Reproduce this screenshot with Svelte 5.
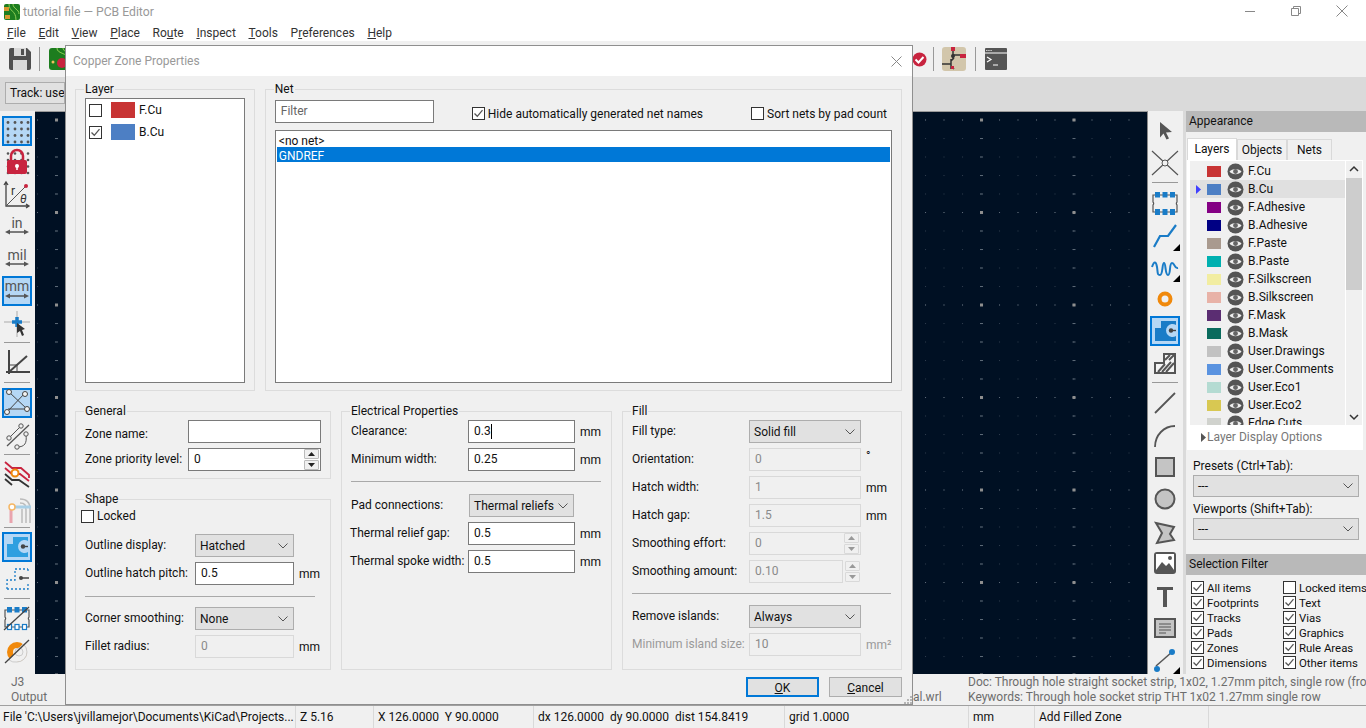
<script>
  const layers = [
    ['F.Cu','#c83434'],['B.Cu','#4d7fc4'],['F.Adhesive','#840084'],['B.Adhesive','#000084'],
    ['F.Paste','#a99a8f'],['B.Paste','#00b0b0'],['F.Silkscreen','#f2eda1'],['B.Silkscreen','#e8b2a7'],
    ['F.Mask','#5b2d72'],['B.Mask','#0a6b5d'],['User.Drawings','#c2c2c2'],['User.Comments','#5a93e0'],
    ['User.Eco1','#b4dbd2'],['User.Eco2','#d8c852'],['Edge.Cuts','#d0d2cd']
  ];
  const filters = [
    ['All items',true],['Locked items',false],['Footprints',true],['Text',true],['Tracks',true],['Vias',true],
    ['Pads',true],['Graphics',true],['Zones',true],['Rule Areas',true],['Dimensions',true],['Other items',true]
  ];
  const gridDots = [];
  for (const y of [6.5,13,19.5,26]) for (const x of [6,13,19.5,26]) gridDots.push([x,y]);
</script>

{#snippet cb(on)}
  <span class="cb">{#if on}<svg width="11" height="11" viewBox="0 0 11 11"><path d="M1.5 5.5 4.3 8.3 9.5 2.2" fill="none" stroke="#555" stroke-width="1.3"/></svg>{/if}</span>
{/snippet}
{#snippet chev()}
  <svg class="chev" width="10" height="6" viewBox="0 0 10 6"><path d="M.5.5 5 5 9.5.5" fill="none" stroke="#555"/></svg>
{/snippet}
{#snippet sel(text, cls)}
  <div class="select {cls}"><span>{text}</span>{@render chev()}</div>
{/snippet}
{#snippet spin(dis)}
  <div class="spin" class:dis>
    <span><svg width="7" height="4" viewBox="0 0 7 4"><path d="M3.5 0 7 4H0z" fill={dis ? '#999' : '#222'}/></svg></span>
    <span><svg width="7" height="4" viewBox="0 0 7 4"><path d="M0 0h7L3.5 4z" fill={dis ? '#999' : '#222'}/></svg></span>
  </div>
{/snippet}
{#snippet eye()}
  <svg width="17" height="17" viewBox="0 0 17 17"><circle cx="8.5" cy="8.5" r="8" fill="#555"/><path d="M2.5 8.5C5 5 12 5 14.5 8.5 12 12 5 12 2.5 8.5z" fill="#eee"/><circle cx="8.5" cy="8.5" r="2.4" fill="#666"/></svg>
{/snippet}
{#snippet zone(fill)}
  <path d="M5 25V12h6V5h15v4A6.500 6.500 0 1 0 26 20v5z" fill={fill}/><path d="M21 14.500h5" stroke="#444" stroke-width="1.400"/><circle cx="21" cy="14.500" r="2.200" fill="#444"/>
{/snippet}
{#snippet footprint(open)}
  <path d="M3 7h24v7a2 2 0 0 0 0 3v7H3v-7a2 2 0 0 0 0-3z" fill="none" stroke="#555" stroke-width="1.200"/>
  {#each [5,12.500,20] as x}
    <rect x={x} y="4" width="5" height="5.500" fill="#1a7cc7"/>
    <rect x={x + .5} y="21.500" width="4" height="5" fill={open ? '#fff' : '#1a7cc7'} stroke="#1a7cc7" stroke-width={open ? 1.200 : 1}/>
  {/each}
{/snippet}
{#snippet corner()}
  <path d="M30 23v7h-7z" fill="#000"/>
{/snippet}
{#snippet unitArrow(y)}
  <path d="M5 {y}h20" stroke="#555" stroke-width="1.500"/>
  <path d="M3 {y}l5-2.500v5zM27 {y}l-5-2.500v5z" fill="#555"/>
{/snippet}

<div class="app">
  <div class="title">
    <svg width="18" height="18" viewBox="0 0 18 18"><rect x="1" y="1" width="16" height="16" rx="2" fill="#1d7d1f"/><path d="M10 1c0 5 6 5 6 10M6 1c0 8 7 6 7 16" stroke="#8fcf55" fill="none"/><rect x="1" y="4" width="5" height="4" fill="#d9982f"/><rect x="2" y="12" width="5" height="4" fill="#d9982f"/></svg>
    <span class="ttext">tutorial file — PCB Editor</span>
    <div class="winbtns">
      <svg width="12" height="12" viewBox="0 0 12 12"><path d="M1 6.500h10" stroke="#888"/></svg>
      <svg width="12" height="12" viewBox="0 0 12 12"><path d="M3.500 3V1.500h7v7H9M1.500 3.500h7v7h-7z" fill="none" stroke="#888"/></svg>
      <svg width="12" height="12" viewBox="0 0 12 12"><path d="M.5.500l11 11M11.500.500l-11 11" stroke="#888"/></svg>
    </div>
  </div>
  <nav class="menu">
    <span><u>F</u>ile</span><span><u>E</u>dit</span><span><u>V</u>iew</span><span><u>P</u>lace</span><span>Ro<u>u</u>te</span><span><u>I</u>nspect</span><span><u>T</u>ools</span><span>P<u>r</u>eferences</span><span><u>H</u>elp</span>
  </nav>
  <div class="bar1">
    <svg class="save" width="22" height="22" viewBox="0 0 22 22"><path d="M0 2a2 2 0 0 1 2-2h16l4 4v16a2 2 0 0 1-2 2H2a2 2 0 0 1-2-2z" fill="#4f4f4f"/><rect x="5" y="0" width="12" height="8" fill="#d8d8d8"/><rect x="12" y="1" width="3" height="6" fill="#4f4f4f"/><rect x="4" y="12" width="14" height="10" fill="#d8d8d8"/></svg>
    <i class="vsep"></i>
    <svg class="pcb" width="24" height="24" viewBox="0 0 24 24"><rect x="0" y="1" width="22" height="22" rx="3" fill="#1d7d1f"/><path d="M8 1c0 6 9 4 14 12M14 1c0 3 4 4 8 7" stroke="#8fcf55" fill="none"/><circle cx="4" cy="15" r="1.500" fill="#f0c060"/><circle cx="13" cy="16" r="5" fill="#c8243f"/></svg>
    <div class="barend">
      <svg width="15" height="15" viewBox="0 0 15 15"><circle cx="7.500" cy="7.500" r="7" fill="#c8243f"/><path d="M3.500 7.500l3 3 5-5.500" stroke="#fff" stroke-width="2" fill="none"/></svg>
      <i class="vsep tall"></i>
      <svg class="sch" width="24" height="24" viewBox="0 0 24 24"><rect width="24" height="24" rx="3" fill="#d2c6ab"/><path d="M11 0v8M11 8h9M11 8v4M0 17h9M9 12v10M9 14l3-3M9 19l3 3" stroke="#333" stroke-width="1.500" fill="none"/><circle cx="11" cy="9" r="2" fill="#333"/><rect x="9" y="0" width="4" height="4" fill="#c8243f"/><rect x="18" y="7" width="6" height="4" fill="#c8243f"/><rect x="9" y="19" width="3" height="3" fill="#c8243f"/></svg>
      <i class="vsep"></i>
      <svg width="22" height="22" viewBox="0 0 22 22"><rect width="22" height="22" rx="1" fill="#555"/><path d="M0 5h22" stroke="#fff"/><path d="M1 2.500h6" stroke="#ccc" stroke-dasharray="1.500 .7"/><path d="M2 9l4 2.500L2 14" stroke="#fff" stroke-width="1.200" fill="none"/><path d="M8 17h5" stroke="#fff"/></svg>
    </div>
  </div>
  <div class="bar2"><div class="combo">Track: use</div></div>

  <div class="main">
    <div class="ltool">
      <div class="tb on"><svg viewBox="0 0 30 30">{#each gridDots as d}<circle cx={d[0]} cy={d[1]} r="1.400" fill="#555"/>{/each}</svg></div>
      <div class="tb g1"><svg viewBox="0 0 30 30">{#each gridDots as d}<circle cx={d[0]} cy={d[1]} r="1.300" fill="#555"/>{/each}<path d="M9 13V9a6 6 0 0 1 12 0v4" fill="none" stroke="#c8243f" stroke-width="2.500"/><rect x="5" y="13" width="20" height="14" rx="2" fill="#c8243f"/><circle cx="15" cy="19" r="2" fill="#fff"/><path d="M15 19v4" stroke="#fff" stroke-width="1.500"/></svg></div>
      <div class="tb g3"><svg viewBox="0 0 30 30"><path d="M4 2v24h22M2 5l2-3 2 3M24 24l3 2-3 2" fill="none" stroke="#444" stroke-width="1.300"/><path d="M4 26 24 6" stroke="#555"/><circle cx="24" cy="6" r="2" fill="#c8243f"/><text x="9" y="15" class="ict">r</text><text x="18" y="23" class="ict it">θ</text></svg></div>
      <div class="tb g3"><svg viewBox="0 0 30 30"><text x="15" y="14.500" class="icu">in</text>{@render unitArrow(19)}</svg></div>
      <div class="tb g2"><svg viewBox="0 0 30 30"><text x="15" y="14.500" class="icu">mil</text>{@render unitArrow(19)}</svg></div>
      <div class="tb on g1"><svg viewBox="0 0 30 30"><text x="15" y="15" class="icu">mm</text>{@render unitArrow(20)}</svg></div>
      <div class="tb g4"><svg viewBox="0 0 30 30"><path d="M15 1v26M2 12h26" stroke="#aaa"/><path d="M15 7v10M10 12h10" stroke="#1a7cc7" stroke-width="3.500"/><path d="M15 13l8 6-3 1 2 5-2 1-2-5-3 2z" fill="#333"/></svg></div>
      <i class="hsep sa"></i>
      <div class="tb sb"><svg viewBox="0 0 30 30"><path d="M7 2v24M4 24h24" stroke="#444" stroke-width="2"/><path d="M7 24 25 8" stroke="#444" stroke-width="2"/><path d="M7 17h8v7" stroke="#444" fill="none"/></svg></div>
      <i class="hsep sc"></i>
      <div class="tb on sd"><svg viewBox="0 0 30 30"><path d="M7 4l18 17M5 24 23 5M25 21H6" stroke="#444" fill="none"/><g fill="#f4f4f4" stroke="#444"><circle cx="7" cy="4" r="2.500"/><circle cx="23" cy="6" r="2.500"/><circle cx="5" cy="24" r="2.500"/><circle cx="25" cy="21" r="2.500"/></g></svg></div>
      <div class="tb g3"><svg viewBox="0 0 30 30"><path d="M5 25 27 4" stroke="#555" stroke-width="1.300"/><path d="M7 17 18 6M15 26c8 0 10-4 9-12" stroke="#555" fill="none"/><g fill="#f0f0f0" stroke="#555"><circle cx="7" cy="17" r="2.200"/><circle cx="19" cy="5" r="2.200"/><circle cx="15" cy="26" r="2.200"/><circle cx="24" cy="13" r="2.200"/></g></svg></div>
      <i class="hsep se"></i>
      <div class="tb sf"><svg viewBox="0 0 30 30"><path d="M3 3l7 6h9l8 7v3M3 9l7 6h8l9 7" stroke="#c8243f" stroke-width="1.800" fill="none"/><path d="M3 15l7 6h7l10 7" stroke="#333" stroke-width="1.800" fill="none"/><path d="M3 20l7 6" stroke="#333" stroke-width="1.800"/><circle cx="13" cy="14" r="3.500" fill="#fff" stroke="#f0890c" stroke-width="2"/></svg></div>
      <div class="tb g6"><svg viewBox="0 0 30 30"><path d="M18 8c5 0 6 2 6 8v12M18 4c7 0 10 4 10 10v14M20 14v14" stroke="#bbb" stroke-width="1.500" fill="none"/><path d="M9 28V14" stroke="#e9a4ae" stroke-width="3"/><path d="M12 12h17" stroke="#a8cfe6" stroke-width="3"/><circle cx="10" cy="12" r="3" fill="#fff" stroke="#f5b765" stroke-width="1.500"/></svg></div>
      <i class="hsep sg"></i>
      <div class="tb on sh"><svg viewBox="0 0 30 30">{@render zone('#2f9fe0')}</svg></div>
      <div class="tb g2"><svg viewBox="0 0 30 30"><path d="M5 25V16h8V5h13" fill="none" stroke="#1a7cc7" stroke-width="1.300" stroke-dasharray="2 2"/><path d="M5 25h21v-5M26 5v4" fill="none" stroke="#1a7cc7" stroke-width="1.300" stroke-dasharray="2 2"/><path d="M18 14h9" stroke="#444" stroke-width="1.500"/><circle cx="19" cy="14" r="2" fill="#444"/></svg></div>
      <i class="hsep si"></i>
      <div class="tb sj"><svg viewBox="0 0 30 30">{@render footprint(true)}<path d="M2 27 27 4" stroke="#444" stroke-width="1.300"/></svg></div>
      <div class="tb g4"><svg viewBox="0 0 30 30"><circle cx="15" cy="15" r="10" fill="#f0890c"/><circle cx="15" cy="15" r="4" fill="#f0f0f0"/><path d="M15 25A10 10 0 0 0 25 15 10 10 0 0 0 21 7L7 23a10 10 0 0 0 8 2z" fill="#f0f0f0" stroke="#ccc"/><circle cx="17" cy="15" r="4" fill="none" stroke="#ccc"/><path d="M3 26 27 3" stroke="#444" stroke-width="1.300"/></svg></div>
    </div>

    <div class="canvas">
      <svg width="100%" height="100%">
        <defs>
          <pattern id="p1" width="18.500" height="18.500" patternUnits="userSpaceOnUse" x="2" y="7.500"><rect width="1" height="1" fill="#2e3c4c"/></pattern>
          <pattern id="p2" width="18.500" height="92.500" patternUnits="userSpaceOnUse" x="2" y="7.500"><rect width="1" height="1" fill="#5d6a77"/></pattern>
          <pattern id="p3" width="92.500" height="18.500" patternUnits="userSpaceOnUse" x="20" y="7.500"><rect width="3" height="1" fill="#5d6a77"/></pattern>
          <pattern id="p4" width="92.500" height="92.500" patternUnits="userSpaceOnUse" x="20" y="6.500"><rect width="3" height="3" fill="#8f8f8f"/></pattern>
        </defs>
        <rect width="100%" height="100%" fill="url(#p1)"/><rect width="100%" height="100%" fill="url(#p2)"/><rect width="100%" height="100%" fill="url(#p3)"/><rect width="100%" height="100%" fill="url(#p4)"/>
      </svg>
    </div>

    <div class="rtool">
      <div class="tb"><svg viewBox="0 0 30 30"><path d="M10 6l12 10-6 .5 3 6-2.500 1-3-6-3.500 4z" fill="#555"/></svg></div>
      <div class="tb g2"><svg viewBox="0 0 30 30"><path d="M2 3l26 24M28 3 2 27" stroke="#555" stroke-width="1.200"/><circle cx="15" cy="15" r="3" fill="#f0f0f0" stroke="#555"/></svg></div>
      <i class="hsep"></i>
      <div class="tb r1"><svg viewBox="0 0 30 30">{@render footprint(false)}</svg></div>
      <div class="tb g3"><svg viewBox="0 0 30 30"><path d="M4 26l6-11h8l8-11" stroke="#1a7cc7" stroke-width="2.200" fill="none"/>{@render corner()}</svg></div>
      <div class="tb g1"><svg viewBox="0 0 30 30"><path d="M2 15c2-6 4-6 5 0s0 8 3 8 2-12 4-12 1 12 4 12 1-12 4-12 2 6 6 5" stroke="#1a7cc7" stroke-width="2" fill="none"/>{@render corner()}</svg></div>
      <div class="tb g2"><svg viewBox="0 0 30 30"><circle cx="15" cy="15" r="5.500" fill="none" stroke="#f0890c" stroke-width="4"/></svg></div>
      <div class="tb on g2"><svg viewBox="0 0 30 30">{@render zone('#1a7cc7')}</svg></div>
      <div class="tb g2"><svg viewBox="0 0 30 30"><path d="M5 25V15h9V6h11v19z" fill="#f4f4f4" stroke="#555" stroke-width="2"/><path d="M8 24l7-8M12 24l9-10M16 24l8-9M15 12l5-5M19 12l5-5" stroke="#555" stroke-width="2"/></svg></div>
      <i class="hsep r2"></i>
      <div class="tb r3"><svg viewBox="0 0 30 30"><path d="M5 25 25 5" stroke="#555" stroke-width="1.800"/></svg></div>
      <div class="tb g3"><svg viewBox="0 0 30 30"><path d="M5 26C5 14 14 5 25 5" fill="none" stroke="#555" stroke-width="1.800"/></svg></div>
      <div class="tb g1"><svg viewBox="0 0 30 30"><rect x="6" y="6" width="18" height="18" fill="#c4c4c4" stroke="#555" stroke-width="2"/></svg></div>
      <div class="tb g2"><svg viewBox="0 0 30 30"><circle cx="15" cy="15" r="9.500" fill="#c4c4c4" stroke="#555" stroke-width="2"/></svg></div>
      <div class="tb g3"><svg viewBox="0 0 30 30"><path d="M6 6l18 4-4 7 4 6-17 3 5-10z" fill="#c4c4c4" stroke="#555" stroke-width="2"/></svg></div>
      <div class="tb g1"><svg viewBox="0 0 30 30"><rect x="4" y="4" width="22" height="22" rx="3" fill="#555"/><rect x="6" y="6" width="18" height="16" fill="#fff"/><path d="M6 22l6-8 4 4 3-3 5 7z" fill="#555"/><circle cx="20" cy="10" r="2" fill="#555"/></svg></div>
      <div class="tb g3"><svg viewBox="0 0 30 30"><path d="M7 6h16v3h-6v17h-4V9H7z" fill="#555"/></svg></div>
      <div class="tb g2"><svg viewBox="0 0 30 30"><rect x="5" y="6" width="20" height="18" fill="#c4c4c4" stroke="#555" stroke-width="2"/><path d="M9 11h12M9 14h12M9 17h12M9 20h7" stroke="#555"/></svg></div>
      <div class="tb g1"><svg viewBox="0 0 30 30"><path d="M6 22 22 8" stroke="#555" stroke-width="1.500"/><circle cx="22" cy="8" r="3" fill="#1a7cc7"/><circle cx="7" cy="25" r="3" fill="#1a7cc7"/>{@render corner()}</svg></div>
    </div>

    <aside class="panel">
      <div class="phead">Appearance</div>
      <div class="tabs"><span class="tab act">Layers</span><span class="tab">Objects</span><span class="tab">Nets</span></div>
      <div class="pbody">
        <div class="lwrap">
          <div class="llist">
            {#each layers as l, i}
              <div class="lrow" class:cur={i === 1}>
                <span class="mark">{#if i === 1}<svg width="5" height="9" viewBox="0 0 5 9"><path d="M0 0l5 4.500L0 9z" fill="#3f3fff"/></svg>{/if}</span>
                <span class="sw" style="background:{l[1]}"></span>
                {@render eye()}
                <span class="lname">{l[0]}</span>
              </div>
            {/each}
          </div>
          <div class="sbar">
            <svg width="16" height="16" viewBox="0 0 16 16"><path d="M4 10l4-4 4 4" fill="none" stroke="#333" stroke-width="1.500"/></svg>
            <div class="thumb"></div>
            <svg class="sdown" width="16" height="16" viewBox="0 0 16 16"><path d="M4 6l4 4 4-4" fill="none" stroke="#333" stroke-width="1.500"/></svg>
          </div>
        </div>
        <div class="ldo"><svg width="5" height="9" viewBox="0 0 5 9"><path d="M0 0l5 4.500L0 9z" fill="#555"/></svg>Layer Display Options</div>
      </div>
      <div class="plabel first">Presets (Ctrl+Tab):</div>
      {@render sel('---','pselect')}
      <div class="plabel">Viewports (Shift+Tab):</div>
      {@render sel('---','pselect')}
      <div class="phead sf2">Selection Filter</div>
      <div class="fgrid">
        {#each filters as f}
          <label class="fitem">{@render cb(f[1])}<span>{f[0]}</span></label>
        {/each}
      </div>
    </aside>
  </div>

  <div class="msg">
    <div class="m1"><div>J3</div><div>Output</div></div>
    <div class="m2"><div>&nbsp;</div><div>al.wrl</div></div>
    <div class="m3"><div>Doc: Through hole straight socket strip, 1x02, 1.27mm pitch, single row (from Kicad 4.0.7)</div><div>Keywords: Through hole socket strip THT 1x02 1.27mm single row</div></div>
  </div>

  <footer class="status">
    <span class="s1">File 'C:\Users\jvillamejor\Documents\KiCad\Projects...</span>
    <span class="s2">Z 5.16</span>
    <span class="s3">X 126.0000&nbsp; Y 90.0000</span>
    <span class="s4">dx 126.0000&nbsp; dy 90.0000&nbsp; dist 154.8419</span>
    <span class="s5">grid 1.0000</span>
    <span class="s6">mm</span>
    <span class="s7">Add Filled Zone</span>
    <span class="s8"></span>
  </footer>

  <div class="dialog">
    <div class="dtitle"><span>Copper Zone Properties</span><svg width="11" height="11" viewBox="0 0 11 11"><path d="M.5.500l10 10M10.500.500l-10 10" stroke="#888"/></svg></div>
    <div class="dbody">
      <div class="toprow">
        <fieldset class="g-layer"><legend>Layer</legend>
          <div class="laylist">
            <div class="layrow">{@render cb(false)}<i class="lsw red"></i><span>F.Cu</span></div>
            <div class="layrow">{@render cb(true)}<i class="lsw blue"></i><span>B.Cu</span></div>
          </div>
        </fieldset>
        <fieldset class="g-net"><legend>Net</legend>
          <div class="netbar">
            <div class="field filter ph">Filter</div>
            <label class="chk hide">{@render cb(true)}<span>Hide automatically generated net names</span></label>
            <label class="chk sort">{@render cb(false)}<span>Sort nets by pad count</span></label>
          </div>
          <div class="netlist"><div>&lt;no net&gt;</div><div class="picked">GNDREF</div></div>
        </fieldset>
      </div>
      <div class="botrow">
        <div class="col1">
          <fieldset class="g-general"><legend>General</legend>
            <div class="rows">
              <div class="row"><span class="lab name">Zone name:</span><div class="field f1"></div></div>
              <div class="row"><span class="lab">Zone priority level:</span><div class="field f1 withspin"><span>0</span>{@render spin(false)}</div></div>
            </div>
          </fieldset>
          <fieldset class="g-shape"><legend>Shape</legend>
            <label class="chk locked">{@render cb(false)}<span>Locked</span></label>
            <div class="rows">
              <div class="row"><span class="lab">Outline display:</span>{@render sel('Hatched','s99')}</div>
              <div class="row"><span class="lab">Outline hatch pitch:</span><div class="field f99">0.5</div><span class="unit">mm</span></div>
              <hr class="div shape"/>
              <div class="row"><span class="lab">Corner smoothing:</span>{@render sel('None','s99')}</div>
              <div class="row"><span class="lab">Fillet radius:</span><div class="field f99 dis">0</div><span class="unit">mm</span></div>
            </div>
          </fieldset>
        </div>
        <fieldset class="g-elec"><legend>Electrical Properties</legend>
          <div class="rows">
            <div class="row"><span class="lab">Clearance:</span><div class="field f107">0.3<i class="caret"></i></div><span class="unit">mm</span></div>
            <div class="row"><span class="lab">Minimum width:</span><div class="field f107">0.25</div><span class="unit">mm</span></div>
            <hr class="div elec"/>
            <div class="row"><span class="lab">Pad connections:</span>{@render sel('Thermal reliefs','s105')}</div>
            <div class="row"><span class="lab tight">Thermal relief gap:</span><div class="field f107">0.5</div><span class="unit">mm</span></div>
            <div class="row"><span class="lab tight">Thermal spoke width:</span><div class="field f107">0.5</div><span class="unit">mm</span></div>
          </div>
        </fieldset>
        <fieldset class="g-fill"><legend>Fill</legend>
          <div class="rows">
            <div class="row"><span class="lab">Fill type:</span>{@render sel('Solid fill','s112')}</div>
            <div class="row"><span class="lab">Orientation:</span><div class="field f112 dis">0</div><span class="unit deg">°</span></div>
            <div class="row"><span class="lab">Hatch width:</span><div class="field f112 dis">1</div><span class="unit">mm</span></div>
            <div class="row"><span class="lab">Hatch gap:</span><div class="field f112 dis">1.5</div><span class="unit">mm</span></div>
            <div class="row"><span class="lab">Smoothing effort:</span><div class="field f112 dis withspin"><span>0</span>{@render spin(true)}</div></div>
            <div class="row"><span class="lab">Smoothing amount:</span><div class="field f94 dis">0.10</div>{@render spin(true)}</div>
            <hr class="div fill"/>
            <div class="row"><span class="lab">Remove islands:</span>{@render sel('Always','s112')}</div>
            <div class="row"><span class="lab off">Minimum island size:</span><div class="field f112 dis">10</div><span class="unit off">mm²</span></div>
          </div>
        </fieldset>
      </div>
      <div class="btns">
        <button class="btn def"><u>O</u>K</button>
        <button class="btn"><u>C</u>ancel</button>
      </div>
      <svg class="grip" width="9" height="9" viewBox="0 0 9 9"><g fill="#b5b5b5"><rect x="7" y="1" width="2" height="2"/><rect x="4" y="4" width="2" height="2"/><rect x="7" y="4" width="2" height="2"/><rect x="1" y="7" width="2" height="2"/><rect x="4" y="7" width="2" height="2"/><rect x="7" y="7" width="2" height="2"/></g></svg>
    </div>
  </div>
</div>

<style>
  :global(body){margin:0;background:#f0f0f0}
  .app{position:relative;width:1366px;height:728px;overflow:hidden;font:12px/16px Roboto,"Noto Sans",sans-serif;color:#111;background:#f0f0f0;display:flex;flex-direction:column}
  .app svg{display:block;flex:none}
  .title{height:23px;background:#fff;display:flex;align-items:center;padding-left:3px;color:#999;font-size:12.200px;box-sizing:border-box;padding-top:1px}
  .ttext{margin-left:2px}
  .winbtns{margin-left:auto;display:flex;gap:34px;margin-right:18px;margin-top:-3px}
  .menu{height:18px;background:#fff;display:flex;gap:12.700px;padding-left:7px;color:#333;line-height:21px}
  .menu span{display:block}
  .bar1{height:36px;display:flex;align-items:center;padding-left:9px;position:relative;box-sizing:border-box}
  .save{margin-right:8px}
  .vsep{width:1px;height:24px;background:#999;display:block;flex:none}
  .pcb{margin-left:9px}
  .barend{margin-left:auto;display:flex;align-items:center;margin-right:359px}
  .barend .vsep{margin:0 9px}
  .barend .vsep.tall{margin:0 8px 0 6px}
  .bar2{height:34px;background:#dadada;padding:5px;box-sizing:border-box}
  .combo{width:60px;height:22px;border:1px solid #adadad;background:#e1e1e1;overflow:hidden;white-space:nowrap;line-height:20px;padding-left:4px;box-sizing:border-box}
  .main{height:563px;display:flex;background:#f0f0f0}
  .ltool{width:35px;padding:5px 0 0 2px;box-sizing:border-box;display:flex;flex-direction:column;flex:none}
  .tb{width:30px;height:30px;flex:none;box-sizing:border-box}
  .tb svg{width:30px;height:30px}
  .tb.on{background:#b5d7f5;box-shadow:inset 0 0 0 2px #0078d7}
  .g1{margin-top:1px}.g2{margin-top:2px}.g3{margin-top:3px}.g4{margin-top:4px}.g6{margin-top:6px}
  .hsep{display:block;height:1px;width:26px;background:#999;flex:none;margin-left:2px;margin-top:2px}
  .sa{margin-top:2px}.sb{margin-top:5px}.sc{margin-top:4px}.sd{margin-top:5px}.se{margin-top:3px}.sf{margin-top:4px}.sg{margin-top:2px}.sh{margin-top:4px}.si{margin-top:4px}.sj{margin-top:4px}
  .ict{font:12px Roboto,sans-serif;fill:#333}
  .it{font-style:italic}
  .icu{font:14px Roboto,sans-serif;fill:#555;text-anchor:middle}
  .canvas{width:1113px;background:#001023;border-top:1px solid #999;box-sizing:border-box;flex:none;border-right:1px solid #8a8a8a}
  .rtool{width:35px;padding:5px 0 0 2px;box-sizing:border-box;flex:none;display:flex;flex-direction:column}
  .rtool .hsep{margin-top:4px}
  .r1{margin-top:5px}.r2{margin-top:4px}.r3{margin-top:5px}
  .panel{width:180px;border-left:3px solid #dadada;box-sizing:content-box;flex:none;display:flex;flex-direction:column;background:#f0f0f0}
  .phead{height:21px;background:#b9b9b9;line-height:20px;padding-left:3px;flex:none}
  .tabs{display:flex;margin-top:6px;padding-left:1px;height:22px;flex:none}
  .tab{width:50px;border:1px solid #d9d9d9;border-bottom:0;text-align:center;line-height:21px;box-sizing:border-box;margin-top:1px}
  .tab:nth-child(3){width:45px}
  .tab.act{background:#fff;margin-top:0;border-color:#d9d9d9}
  .pbody{background:#fff;height:290px;width:176px;margin-left:1px;flex:none;box-sizing:border-box;padding:1px 0 0 3px}
  .lwrap{display:flex;height:264px}
  .llist{width:155px;background:#f0f0f0;overflow:hidden;padding-top:1px;box-sizing:border-box}
  .lrow{height:18px;display:flex;align-items:center}
  .lrow.cur{background:#e0e0e0}
  .mark{width:17px;padding-left:6px;box-sizing:border-box}
  .sw{width:14px;height:11px;margin-right:6px;flex:none}
  .lname{margin-left:4px;white-space:nowrap}
  .sbar{width:16px;margin-left:1px;background:#f0f0f0;position:relative;display:flex;flex-direction:column}
  .thumb{height:112px;margin-top:1px;background:#cdcdcd}
  .sdown{margin-top:auto}
  .ldo{display:flex;align-items:center;gap:1px;padding-left:11px;color:#777;height:24px}
  .plabel{margin:4px 0 0 7px;height:16px;line-height:16px;flex:none}
  .plabel.first{margin-top:8px}
  .select{border:1px solid #adadad;background:#e1e1e1;height:23px;box-sizing:border-box;display:flex;align-items:center;justify-content:space-between;padding:0 5px 0 4px;flex:none}
  .pselect{width:166px;margin:1px 0 0 7px;height:22px}
  .sf2{margin-top:14px}
  .fgrid{display:grid;grid-template-columns:92px auto;grid-auto-rows:15px;padding:5px 0 0 5px;font-size:11.400px}
  .fitem{display:flex;align-items:center;gap:3px;white-space:nowrap}
  .cb{width:13px;height:13px;border:1px solid #333;background:#fff;box-sizing:border-box;display:block;flex:none}
  .msg{height:31px;display:flex;color:#6d6d6d;line-height:15px;overflow:hidden;flex:none}
  .m1{width:64px;padding:1px 0 0 11px;box-sizing:border-box;flex:none}
  .m2{width:904px;flex:none;padding:1px 0 0 849px;white-space:nowrap;box-sizing:border-box}
  .m3{padding-top:1px;white-space:nowrap}
  .status{height:23px;border-top:1px solid #a0a0a0;box-sizing:border-box;display:flex;line-height:23px;flex:none}
  .status span{display:block;height:22px;border-right:1px solid #d9d9d9;box-sizing:border-box;padding-left:4px;white-space:nowrap;overflow:hidden;flex:none}
  .s1{width:296px;padding-left:3px!important}.s2{width:78px}.s3{width:160px}.s4{width:251px}.s5{width:184px}.s6{width:66px}.s7{width:174px}
  .s8{border-right:0!important}

  .dialog{position:absolute;left:65px;top:45px;width:848px;height:660px;border:1px solid #8f8f8f;box-sizing:border-box;background:#f0f0f0;display:flex;flex-direction:column}
  .dtitle{height:30px;background:#fff;color:#999;padding:0 10px 0 7px;display:flex;align-items:center;justify-content:space-between;flex:none}
  .dbody{padding:5px 10px 0 9px;display:flex;flex-direction:column;gap:12px;flex:1;position:relative}
  fieldset{margin:0;border:1px solid #dcdcdc;min-width:0;box-sizing:border-box;padding:1px 9px 8px}
  legend{padding:0 1px;margin-left:-1px;line-height:16px;height:16px}
  .toprow{display:flex;gap:10px;height:310px;flex:none}
  .g-layer{width:180px}
  .g-net{width:638px;padding-bottom:8px}
  .laylist{height:285px;background:#fff;border:1px solid #7a7a7a;box-sizing:border-box;padding:0 0 0 3px}
  .layrow{height:22px;display:flex;align-items:center}
  .lsw{width:24px;height:16px;margin:0 4px 0 9px;display:block}
  .red{background:#c83434}.blue{background:#4d7fc4}
  .netbar{display:flex;align-items:center;padding-top:2px;height:23px;padding-right:5px;margin-bottom:7px}
  .field{background:#fff;border:1px solid #7a7a7a;height:23px;box-sizing:border-box;line-height:21px;padding-left:5px;position:relative;flex:none}
  .field.dis{background:#f0f0f0;border-color:#d9d9d9;color:#8a8a8a}
  .filter{width:159px}
  .ph{color:#666}
  .chk{display:flex;align-items:center;gap:3px;white-space:nowrap}
  .hide{margin:4px 0 0 38px}
  .sort{margin:4px 0 0 auto}
  .netlist{height:253px;background:#fff;border:1px solid #7a7a7a;box-sizing:border-box;padding:1px 1px 0;line-height:18px}
  .netlist div{height:15px;padding-left:2px}
  .picked{background:#0078d7;color:#fff;overflow:hidden}
  .botrow{display:flex;gap:10px;height:267px;flex:none}
  .col1{width:256px;display:flex;flex-direction:column;gap:12px;flex:none}
  .g-general{height:76px}
  .g-shape{height:179px;position:relative;padding-top:0}
  .g-elec{width:271px;flex:none}
  .g-fill{width:280px;flex:none}
  .rows{display:flex;flex-direction:column;gap:5px}
  .row{display:flex;align-items:center;height:23px}
  .lab{white-space:nowrap;flex:none;margin-top:-1px}
  .lab.name{margin-top:5px}
  .g-general .lab{width:103px}
  .f1{width:133px}
  .withspin{display:flex;align-items:center;justify-content:space-between;padding-right:1px}
  .spin{display:flex;flex-direction:column;gap:1px;width:15px;flex:none}
  .spin span{height:10px;display:flex;align-items:center;justify-content:center;background:#f0f0f0;border:1px solid #bbb;box-sizing:border-box;border-radius:1px}
  .spin.dis span{border-color:#d9d9d9}
  .f94 + .spin{margin-left:2px}
  .locked{margin:1px 0 0 -4px;height:16px}
  .g-shape .rows{margin-top:10px}
  .g-shape .lab{width:110px}
  .s99{width:99px}.f99{width:99px}
  .unit{margin-left:5px;white-space:nowrap}
  .div{border:0;border-top:1px solid #a9a9a9;margin:0;height:0;flex:none}
  .div.shape{width:230px;margin:6px 0 5px}
  .g-elec .lab{width:117px}
  .g-elec .lab.tight{margin-left:-1px;width:118px}
  .f107{width:107px}
  .s105{width:105px;margin-left:1px;padding-right:5px;margin-right:1px;white-space:nowrap}
  .caret{display:inline-block;width:1px;height:15px;background:#000;vertical-align:middle;margin-left:0}
  .div.elec{width:250px;margin:5px 0 7px}
  .g-fill .lab{width:117px}
  .f112,.s112{width:112px}
  .f94{width:94px}
  .deg{margin-top:-8px}
  .div.fill{width:259px;margin:5px 0 6px}
  .off{color:#9a9a9a}
  .btns{display:flex;justify-content:flex-end;gap:10px;margin-top:-5px;padding-right:0}
  .btn{width:73px;height:20px;padding:1px 0 0;border:1px solid #adadad;background:#e1e1e1;font:inherit;color:#111;line-height:16px}
  .btn.def{border:2px solid #0078d7;width:73px}
  .grip{position:absolute;right:0;bottom:0}
</style>
